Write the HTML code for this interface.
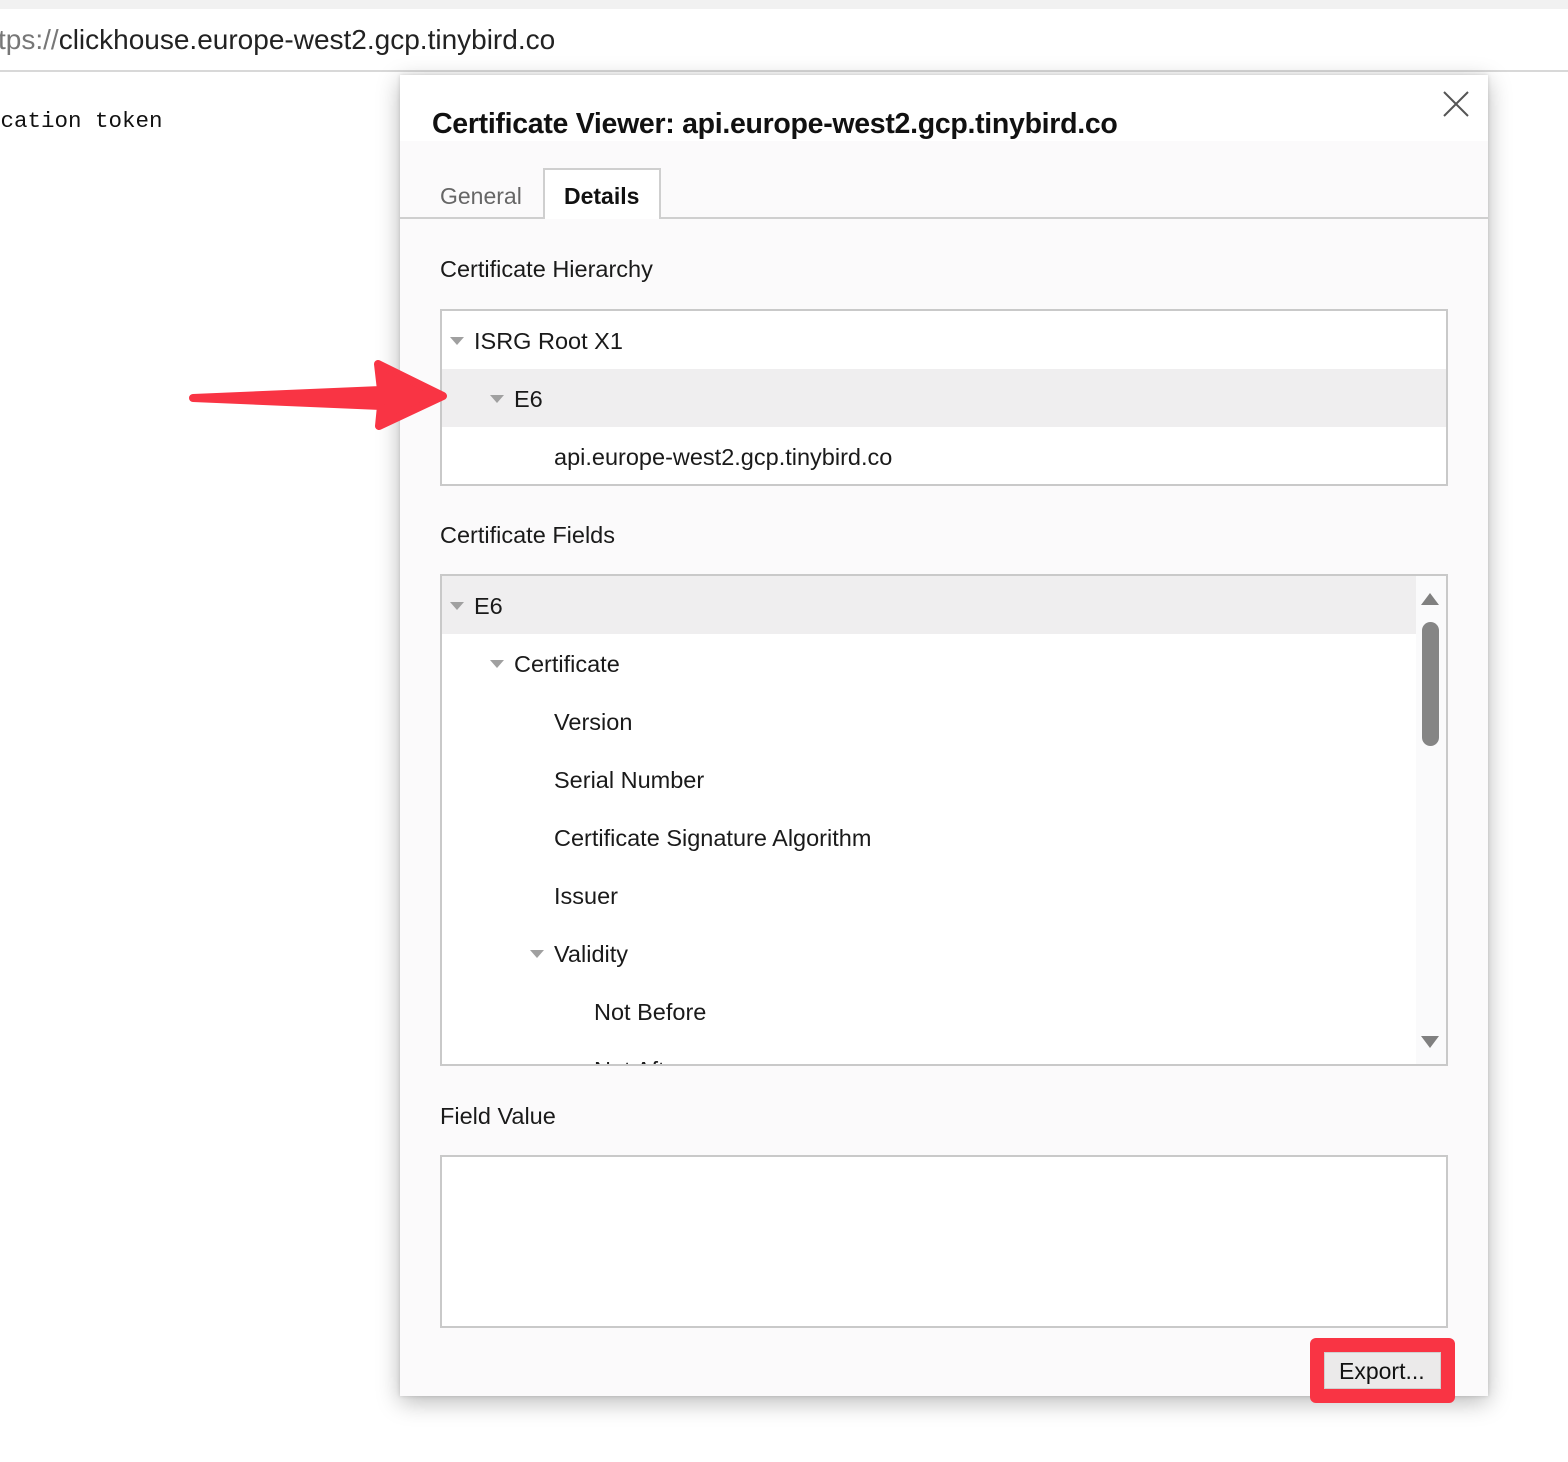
<!DOCTYPE html>
<html><head><meta charset="utf-8"><style>
*{margin:0;padding:0;box-sizing:border-box}
body{width:1568px;height:1462px;background:#fff;position:relative;overflow:hidden;font-family:"Liberation Sans",sans-serif;color:#1a1a1a}
.a{position:absolute;white-space:nowrap}
.urlbar{position:absolute;left:0;top:0;width:1568px;height:72px;background:#fff;border-top:9px solid #f1f1f1;border-bottom:2px solid #d8d8d8}
.dlg{position:absolute;left:400px;top:75px;width:1088px;height:1321px;background:#fbfafb;box-shadow:0 6px 22px rgba(0,0,0,.28),0 0 4px rgba(0,0,0,.15)}
.box{position:absolute;left:40px;width:1008px;background:#fff;border:2px solid #c9c9c9;overflow:hidden}
.row{position:absolute;left:0;right:0;height:58px;font-size:23.5px;line-height:60px}
.tri{position:absolute;top:26px;width:0;height:0;border-left:7px solid transparent;border-right:7px solid transparent;border-top:8px solid #a0a0a0}
.lbl{font-size:23.5px}
</style></head><body>
<div class="urlbar"></div>
<div class="a" style="left:-2px;top:24px;font-size:28px;color:#222"><span style="color:#777">tps://</span>clickhouse.europe-west2.gcp.tinybird.co</div>
<div class="a" style="left:-13px;top:108px;font-family:'Liberation Mono',monospace;font-size:22.5px;color:#111">ication token</div>

<div class="dlg">
  <div style="position:absolute;left:0;top:0;right:0;height:66px;background:#fff"></div>
  <div class="a" style="left:32px;top:33px;font-size:28.5px;font-weight:bold;color:#111;letter-spacing:-0.3px">Certificate Viewer: api.europe-west2.gcp.tinybird.co</div>
  <svg class="a" style="left:1043px;top:16px" width="26" height="26" viewBox="0 0 26 26"><path d="M1 1L25 25M25 1L1 25" stroke="#555" stroke-width="2"/></svg>
  <div style="position:absolute;left:0;right:0;top:142px;height:2px;background:#cfcfcf"></div>
  <div class="a" style="left:40px;top:108px;font-size:23px;color:#666">General</div>
  <div style="position:absolute;left:143px;top:93px;width:118px;height:51px;background:#fff;border:2px solid #cfcfcf;border-bottom:none"></div>
  <div class="a" style="left:164px;top:108px;font-size:23px;font-weight:bold;color:#111">Details</div>

  <div class="a lbl" style="left:40px;top:181px">Certificate Hierarchy</div>
  <div class="box" style="top:234px;height:177px">
    <div class="row" style="top:0"><div class="tri" style="left:8px"></div><span style="position:absolute;left:32px">ISRG Root X1</span></div>
    <div class="row" style="top:58px;background:#efeeef"><div class="tri" style="left:48px"></div><span style="position:absolute;left:72px">E6</span></div>
    <div class="row" style="top:116px"><span style="position:absolute;left:112px">api.europe-west2.gcp.tinybird.co</span></div>
  </div>

  <div class="a lbl" style="left:40px;top:447px">Certificate Fields</div>
  <div class="box" style="top:499px;height:492px">
    <div class="row" style="top:0;right:30px;background:#efeeef"><div class="tri" style="left:8px"></div><span style="position:absolute;left:32px">E6</span></div>
    <div class="row" style="top:58px"><div class="tri" style="left:48px"></div><span style="position:absolute;left:72px">Certificate</span></div>
    <div class="row" style="top:116px"><span style="position:absolute;left:112px">Version</span></div>
    <div class="row" style="top:174px"><span style="position:absolute;left:112px">Serial Number</span></div>
    <div class="row" style="top:232px"><span style="position:absolute;left:112px">Certificate Signature Algorithm</span></div>
    <div class="row" style="top:290px"><span style="position:absolute;left:112px">Issuer</span></div>
    <div class="row" style="top:348px"><div class="tri" style="left:88px"></div><span style="position:absolute;left:112px">Validity</span></div>
    <div class="row" style="top:406px"><span style="position:absolute;left:152px">Not Before</span></div>
    <div class="row" style="top:464px"><span style="position:absolute;left:152px">Not After</span></div>
    <div style="position:absolute;right:0;top:0;width:30px;height:490px;background:#fafafb"></div>
    <div style="position:absolute;right:7px;top:17px;width:0;height:0;border-left:9px solid transparent;border-right:9px solid transparent;border-bottom:12px solid #808080"></div>
    <div style="position:absolute;right:7px;top:46px;width:17px;height:124px;border-radius:9px;background:#858585"></div>
    <div style="position:absolute;right:7px;top:460px;width:0;height:0;border-left:9px solid transparent;border-right:9px solid transparent;border-top:12px solid #808080"></div>
  </div>

  <div class="a lbl" style="left:40px;top:1028px">Field Value</div>
  <div class="box" style="top:1080px;height:173px"></div>

  <div style="position:absolute;left:910px;top:1263px;width:145px;height:65px;background:#f93444;border-radius:6px"></div>
  <div style="position:absolute;left:924px;top:1277px;width:117px;height:37px;background:#ebeaea;border:1px solid #d0d0d0"></div>
  <div class="a" style="left:939px;top:1283px;font-size:23px;color:#111">Export...</div>
</div>

<svg class="a" style="left:185px;top:360px;z-index:5" width="265" height="72" viewBox="0 0 265 72"><path d="M8 38 L196 30 L193 4 L258 36 L194 66 L196 46 Z" fill="#f93444" stroke="#f93444" stroke-width="8" stroke-linejoin="round"/></svg>
</body></html>
